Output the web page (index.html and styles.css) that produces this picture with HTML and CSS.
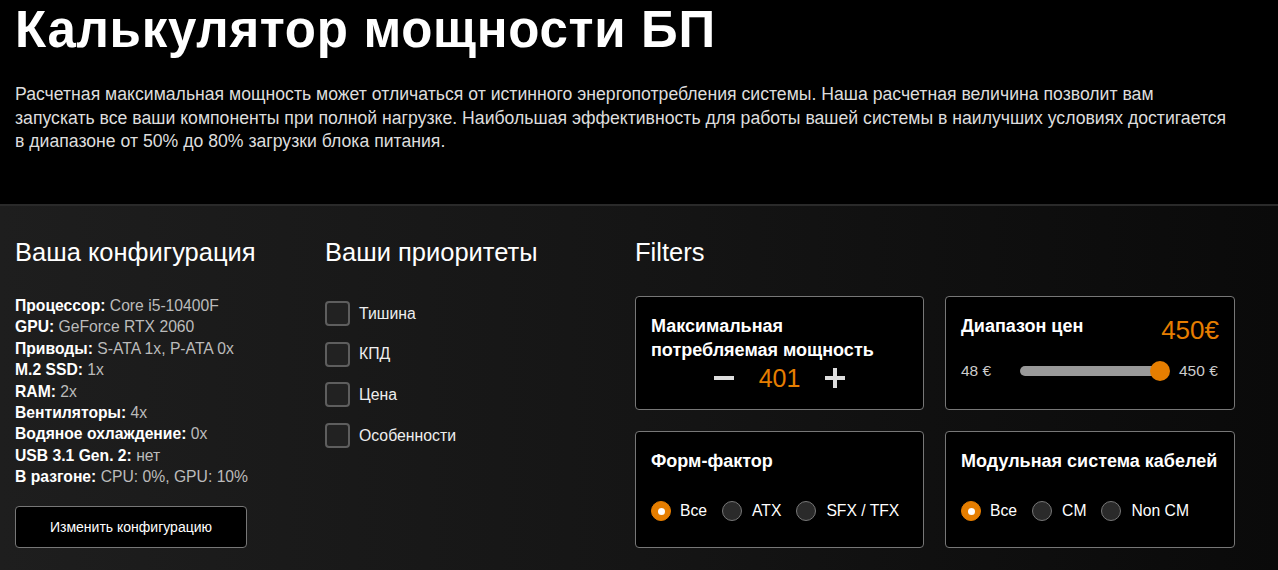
FILE: index.html
```html
<!DOCTYPE html>
<html lang="ru">
<head>
<meta charset="utf-8">
<title>Калькулятор мощности БП</title>
<link rel="stylesheet" href="styles.css">
</head>
<body>
<header class="hero">
  <h1 class="hero-title">Калькулятор мощности БП</h1>
  <p class="hero-text">Расчетная максимальная мощность может отличаться от истинного энергопотребления системы. Наша расчетная величина позволит вам<br>запускать все ваши компоненты при полной нагрузке. Наибольшая эффективность для работы вашей системы в наилучших условиях достигается<br>в диапазоне от 50% до 80% загрузки блока питания.</p>
</header>
<main class="panel">
  <section class="col config">
    <h2 class="col-title">Ваша конфигурация</h2>
    <ul class="spec-list">
      <li><b>Процессор:</b> Core i5-10400F</li>
      <li><b>GPU:</b> GeForce RTX 2060</li>
      <li><b>Приводы:</b> S-ATA 1x, P-ATA 0x</li>
      <li><b>M.2 SSD:</b> 1x</li>
      <li><b>RAM:</b> 2x</li>
      <li><b>Вентиляторы:</b> 4x</li>
      <li><b>Водяное охлаждение:</b> 0x</li>
      <li><b>USB 3.1 Gen. 2:</b> нет</li>
      <li><b>В разгоне:</b> CPU: 0%, GPU: 10%</li>
    </ul>
    <button class="btn">Изменить конфигурацию</button>
  </section>
  <section class="col priorities">
    <h2 class="col-title">Ваши приоритеты</h2>
    <ul class="check-list">
      <li><span class="check"></span>Тишина</li>
      <li><span class="check"></span>КПД</li>
      <li><span class="check"></span>Цена</li>
      <li><span class="check"></span>Особенности</li>
    </ul>
  </section>
  <section class="col filters">
    <h2 class="col-title">Filters</h2>
    <div class="cards">
      <div class="card">
        <div class="card-title">Максимальная<br>потребляемая мощность</div>
        <div class="stepper">
          <span class="step minus"></span>
          <span class="step-value">401</span>
          <span class="step plus"></span>
        </div>
      </div>
      <div class="card">
        <div class="card-head">
          <div class="card-title">Диапазон цен</div>
          <div class="price">450€</div>
        </div>
        <div class="range">
          <span class="range-label">48 €</span>
          <span class="track"><span class="thumb"></span></span>
          <span class="range-label">450 €</span>
        </div>
      </div>
      <div class="card">
        <div class="card-title">Форм-фактор</div>
        <div class="radios">
          <span class="radio on"></span><span class="radio-label">Все</span>
          <span class="radio"></span><span class="radio-label">ATX</span>
          <span class="radio"></span><span class="radio-label">SFX / TFX</span>
        </div>
      </div>
      <div class="card">
        <div class="card-title">Модульная система кабелей</div>
        <div class="radios">
          <span class="radio on"></span><span class="radio-label">Все</span>
          <span class="radio"></span><span class="radio-label">CM</span>
          <span class="radio"></span><span class="radio-label">Non CM</span>
        </div>
      </div>
    </div>
  </section>
</main>
</body>
</html>
```
FILE: styles.css
```css
* { box-sizing: border-box; }
html, body { margin: 0; padding: 0; }
body {
  background: #0b0b0b;
  color: #fff;
  font-family: "Liberation Sans", Arial, sans-serif;
  width: 1278px;
  height: 570px;
  overflow: hidden;
}
.hero {
  background: #000;
  padding: 2px 15px 0 15px;
  height: 206px;
  border-bottom: 2px solid #2a2a2a;
}
.hero-title {
  margin: 0;
  font-size: 51px;
  line-height: 56px;
  font-weight: 700;
  letter-spacing: 0.7px;
}
.hero-text {
  margin: 25px 0 0 0;
  font-size: 17.65px;
  line-height: 23.5px;
  color: #ddd;
  white-space: nowrap;
}
.panel {
  display: grid;
  grid-template-columns: 310px 310px 600px;
  padding: 31px 0 0 15px;
  height: 364px;
  background: linear-gradient(90deg, #1e1e1e 0%, #151515 50%, #0a0a0a 100%);
}
.col-title {
  margin: 0;
  font-size: 25.5px;
  line-height: 30px;
  font-weight: 400;
  color: #fff;
}
.spec-list {
  list-style: none;
  margin: 28px 0 0 0;
  padding: 0;
  font-size: 15.7px;
  line-height: 21.4px;
  color: #bbb;
}
.spec-list b { color: #fff; }
.btn {
  margin-top: 18px;
  width: 232px;
  height: 42px;
  background: #000;
  color: #fff;
  border: 1px solid #777;
  border-radius: 4px;
  font-family: inherit;
  font-size: 14px;
}
.check-list {
  list-style: none;
  margin: 34px 0 0 0;
  padding: 0;
  font-size: 15.8px;
  color: #eee;
}
.check-list li {
  display: flex;
  align-items: center;
  height: 25px;
  margin-bottom: 15.7px;
}
.check {
  width: 25px;
  height: 25px;
  border: 2px solid #5e5e5e;
  border-radius: 4px;
  background: #222;
  margin-right: 9px;
}
.cards {
  display: grid;
  grid-template-columns: 289px 290px;
  grid-template-rows: 114px 117px;
  gap: 21px;
  margin-top: 29px;
}
.card {
  background: #000;
  border: 1px solid #777;
  border-radius: 4px;
  padding: 17px 15px 0 15px;
}
.card-title {
  font-size: 18px;
  font-weight: 700;
  line-height: 24px;
  color: #fff;
}
.stepper {
  display: flex;
  align-items: center;
  justify-content: center;
  gap: 25px;
  height: 30px;
  margin-top: 1px;
}
.step {
  position: relative;
  width: 20px;
  height: 20px;
}
.step::before, .step::after {
  content: "";
  position: absolute;
  background: #ddd;
}
.step::before { left: 0; right: 0; top: 8px; height: 4px; }
.minus::after { display: none; }
.plus::after { top: 0; bottom: 0; left: 8px; width: 4px; }
.step-value {
  font-size: 25px;
  color: #e67e00;
  font-weight: 400;
}
.card-head {
  display: flex;
  justify-content: space-between;
  align-items: flex-start;
}
.price {
  font-size: 26px;
  color: #e67e00;
  line-height: 30px;
  margin-top: 1px;
}
.range {
  display: flex;
  align-items: center;
  margin-top: 17px;
  font-size: 15.5px;
  color: #ccc;
}
.range-label { width: 59px; }
.range-label:last-child { width: auto; margin-left: 10px; }
.track {
  position: relative;
  width: 149px;
  height: 10px;
  border-radius: 5px;
  background: #999;
}
.thumb {
  position: absolute;
  right: -1px;
  top: -5px;
  width: 20px;
  height: 20px;
  border-radius: 50%;
  background: #e67e00;
}
.radios {
  display: flex;
  align-items: center;
  margin-top: 28px;
  font-size: 15.7px;
  color: #fff;
  white-space: nowrap;
}
.radio {
  flex-shrink: 0;
  width: 20px;
  height: 20px;
  border-radius: 50%;
  background: #2a2a2a;
  border: 1px solid #777;
  margin-right: 10px;
}
.radio.on {
  background: #e67e00;
  border-color: #e67e00;
  display: flex;
  align-items: center;
  justify-content: center;
  margin-right: 9px;
}
.radio.on::after {
  content: "";
  width: 7px;
  height: 7px;
  border-radius: 50%;
  background: #fff;
}
.radio-label { margin-right: 15px; flex-shrink: 0; }
```
